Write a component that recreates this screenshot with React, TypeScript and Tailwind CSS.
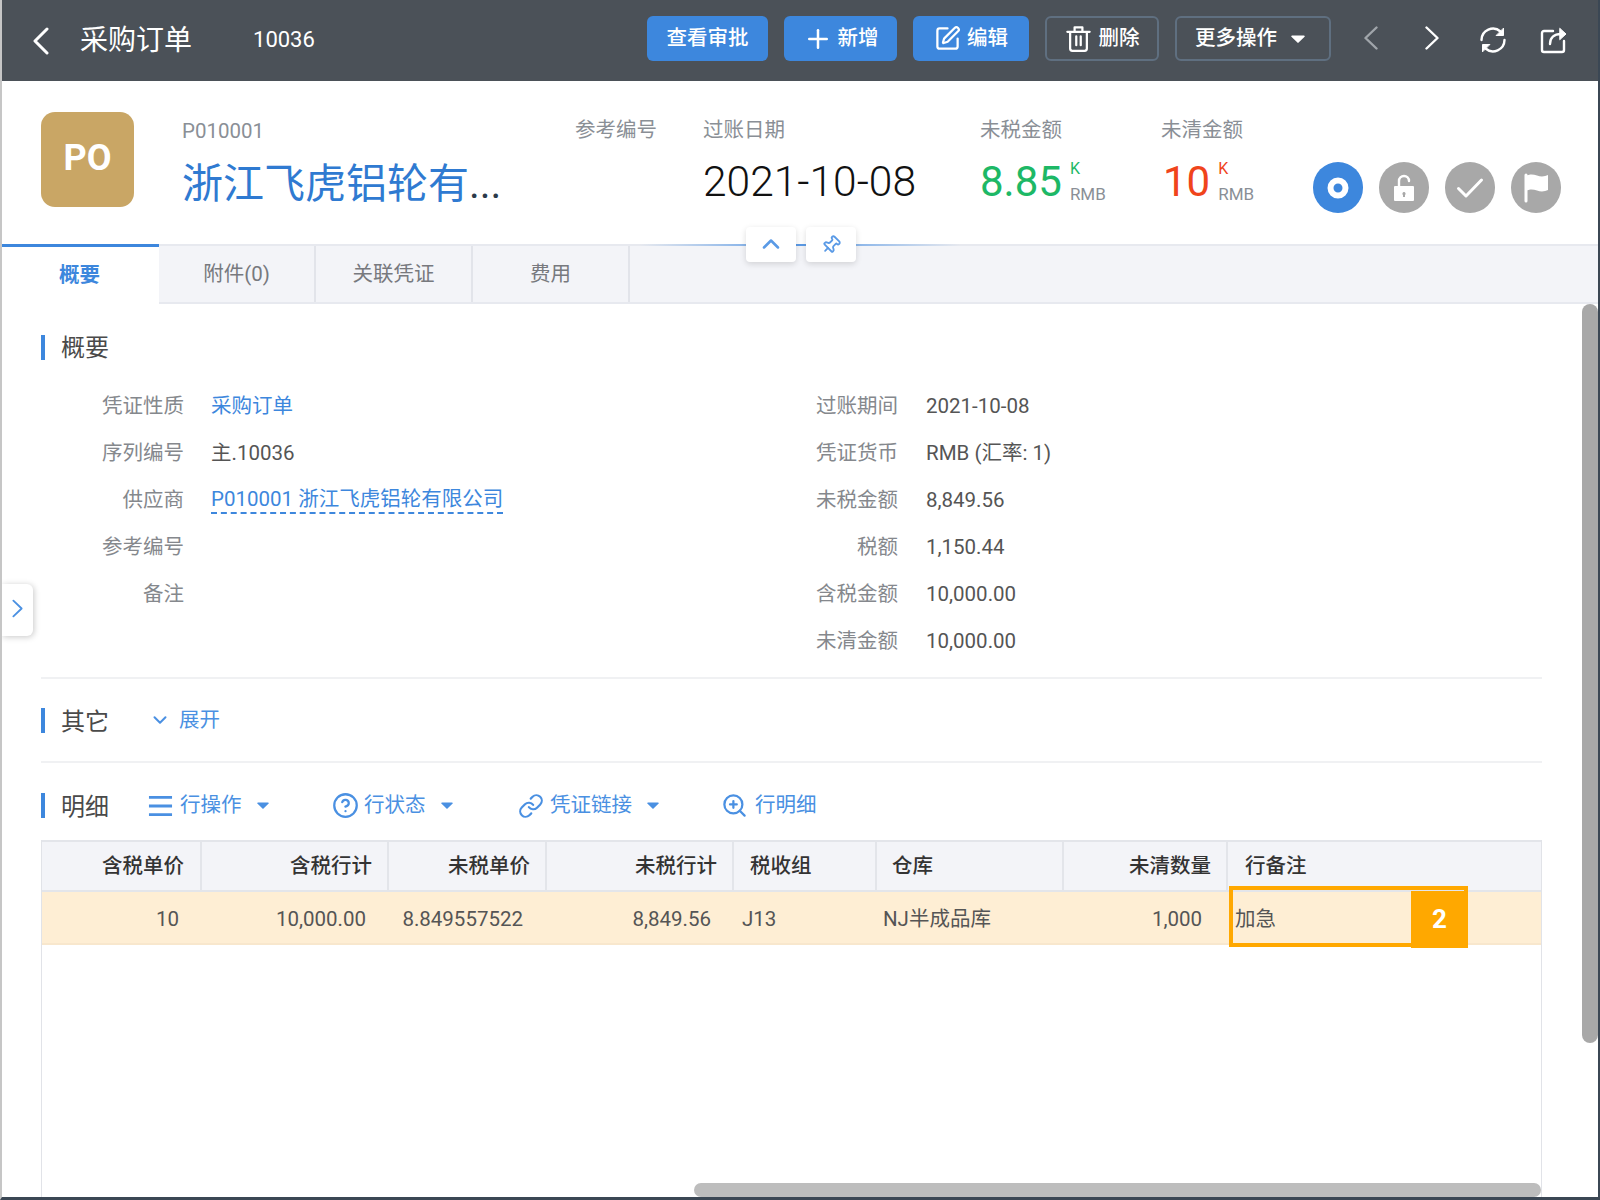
import { ChevronDown, ChevronUp, CircleHelp, Link, Pin, Plus, SquarePen, ZoomIn } from "lucide-react";
import type { ReactNode } from "react";

const tabs = ["概要", "附件(0)", "关联凭证", "费用"];

const leftFields: { label: string; value?: string; kind?: "link" | "dashed" }[] = [
  { label: "凭证性质", value: "采购订单", kind: "link" },
  { label: "序列编号", value: "主.10036" },
  { label: "供应商", value: "P010001 浙江飞虎铝轮有限公司", kind: "dashed" },
  { label: "参考编号" },
  { label: "备注" },
];

const rightFields = [
  { label: "过账期间", value: "2021-10-08" },
  { label: "凭证货币", value: "RMB (汇率: 1)" },
  { label: "未税金额", value: "8,849.56" },
  { label: "税额", value: "1,150.44" },
  { label: "含税金额", value: "10,000.00" },
  { label: "未清金额", value: "10,000.00" },
];

const headCells = [
  { text: "含税单价", className: "justify-end pr-[16px]" },
  { text: "含税行计", className: "justify-end pr-[15px]" },
  { text: "未税单价", className: "justify-end pr-[15px]" },
  { text: "未税行计", className: "justify-end pr-[15px]" },
  { text: "税收组", className: "pl-[16px]" },
  { text: "仓库", className: "pl-[15px]" },
  { text: "未清数量", className: "justify-end pr-[15px]" },
  { text: "行备注", className: "pl-[17px]" },
];

const rowCells = [
  { text: "10", className: "justify-end pr-[23px]" },
  { text: "10,000.00", className: "justify-end pr-[23px]" },
  { text: "8.849557522", className: "justify-end pr-[24px]" },
  { text: "8,849.56", className: "justify-end pr-[23px]" },
  { text: "J13", className: "pl-[8px]" },
  { text: "NJ半成品库", className: "pl-[6px]" },
  { text: "1,000", className: "justify-end pr-[26px]" },
  { text: "加急", className: "pl-[7px]" },
];

function Caret({ className }: { className: string }) {
  return (
    <svg viewBox="0 0 14 8" className={className} fill="currentColor">
      <path d="M1 0.5h12a.8.8 0 0 1 .6 1.3L7.6 7.6a.8.8 0 0 1-1.2 0L.4 1.8A.8.8 0 0 1 1 .5z" />
    </svg>
  );
}

function HeaderButton({ width, filled, children }: { width: string; filled?: boolean; children: ReactNode }) {
  return (
    <button
      className={`${width} ${
        filled ? "bg-[#3d87dd]" : "border-2 border-[#5f6f80]"
      } flex h-[45px] items-center justify-center rounded-[6px] text-[20.5px] font-medium text-white`}
    >
      {children}
    </button>
  );
}

function SectionTitle({ children }: { children: ReactNode }) {
  return (
    <div className="flex h-[25px] items-center border-l-[4px] border-[#3d87dd] pl-[16px] text-[24px] text-[#4a4a4a]">
      {children}
    </div>
  );
}

function ToolItem({ icon, text, caret, width }: { icon: ReactNode; text: string; caret?: boolean; width: string }) {
  return (
    <div className={`${width} flex items-center text-[#4a90e2]`}>
      <span className="flex w-[32px] shrink-0 items-center">{icon}</span>
      <span>{text}</span>
      {caret && <Caret className="ml-[15px] h-[7px] w-[12px]" />}
    </div>
  );
}

function StatusCircle({ blue, children }: { blue?: boolean; children: ReactNode }) {
  return (
    <div
      className={`${
        blue ? "bg-[#3d87dd]" : "bg-[#a8a8a8]"
      } flex h-[51px] w-[50px] items-center justify-center rounded-full text-white`}
    >
      {children}
    </div>
  );
}

export default function App() {
  return (
    <div className="relative flex h-[1200px] w-[1600px] flex-col overflow-hidden bg-white pb-[3px] font-['Roboto','Noto_Sans_CJK_SC',sans-serif] text-[20.5px] text-[#555]">
      {/* top bar */}
      <header className="flex h-[81px] shrink-0 items-center bg-[#4b5158] pl-[32px] pr-[16px] text-white">
        <svg viewBox="0 0 18 28" className="h-[28px] w-[18px]" fill="none" stroke="currentColor" strokeWidth="3" strokeLinecap="round" strokeLinejoin="round">
          <path d="M15 2 3 14l12 12" />
        </svg>
        <span className="ml-[30px] text-[28px]">采购订单</span>
        <span className="mb-[2px] ml-[61px] text-[22px]">10036</span>

        <div className="mb-[4px] ml-auto flex gap-[16px]">
          <HeaderButton width="w-[121px]" filled>
            查看审批
          </HeaderButton>
          <HeaderButton width="w-[113px]" filled>
            <Plus size={30} strokeWidth={2} className="mr-[5px]" />
            新增
          </HeaderButton>
          <HeaderButton width="w-[116px]" filled>
            <SquarePen size={27} strokeWidth={2} className="mr-[6px]" />
            编辑
          </HeaderButton>
          <HeaderButton width="w-[114px]">
            <svg viewBox="0 0 24 26" className="mr-[7px] h-[29px] w-[27px]" fill="none" stroke="currentColor" strokeWidth="2" strokeLinecap="round" strokeLinejoin="round">
              <path d="M2 7h20M8.500 7V3h7v4M4.500 7v15a2 2 0 0 0 2 2h11a2 2 0 0 0 2-2V7M10 11v8M14 11v8" />
            </svg>
            删除
          </HeaderButton>
          <HeaderButton width="w-[156px]">
            更多操作
            <Caret className="ml-[14px] mr-[6px] h-[8px] w-[14px]" />
          </HeaderButton>
        </div>

        <div className="mb-[2px] ml-[9px] flex">
          <span className="flex w-[61px] justify-center text-[#a0a5aa]">
            <svg viewBox="0 0 14 24" className="h-[24px] w-[14px]" fill="none" stroke="currentColor" strokeWidth="2.4" strokeLinecap="round" strokeLinejoin="round">
              <path d="M12.500 1.500 1.500 12l11 10.500" />
            </svg>
          </span>
          <span className="flex w-[61px] justify-center">
            <svg viewBox="0 0 14 24" className="h-[24px] w-[14px]" fill="none" stroke="currentColor" strokeWidth="2.4" strokeLinecap="round" strokeLinejoin="round">
              <path d="M1.500 1.500 12.500 12l-11 10.500" />
            </svg>
          </span>
          <span className="flex w-[61px] justify-center">
            <svg viewBox="0 0 28 28" className="h-[28px] w-[28px]" fill="none" stroke="currentColor" strokeWidth="2.4" strokeLinecap="round">
              <path d="M2.500 14A11.500 11.500 0 0 1 21.500 5.500" />
              <path d="M25.500 14A11.500 11.500 0 0 1 6.500 22.500" />
              <path d="M24.500 2.500v7h-7z" fill="currentColor" strokeWidth="1" strokeLinejoin="round" />
              <path d="M3.500 25.500v-7h7z" fill="currentColor" strokeWidth="1" strokeLinejoin="round" />
            </svg>
          </span>
          <span className="flex w-[61px] justify-center">
            <svg viewBox="0 0 28 28" className="h-[28px] w-[28px]" fill="none" stroke="currentColor" strokeWidth="2.4" strokeLinecap="round" strokeLinejoin="round">
              <path d="M13 5H4a2 2 0 0 0-2 2v17a2 2 0 0 0 2 2h18a2 2 0 0 0 2-2v-9" />
              <path d="M10 18c0-6 4-10 11-10" />
              <path d="M20 2.500 26 8l-6 5.500z" fill="currentColor" strokeWidth="1" />
            </svg>
          </span>
        </div>
      </header>

      {/* document summary */}
      <section className="flex h-[163px] shrink-0 pl-[41px]">
        <div className="mt-[31px] flex h-[95px] w-[93px] items-center justify-center rounded-[14px] bg-[#c9a665] pb-[4px] text-[36px] font-bold text-white">
          PO
        </div>
        <div className="ml-[48px] w-[393px] pt-[35px]">
          <div className="h-[28px] pt-[1px] text-[20.5px] leading-[28px] text-[#8a8f96]">P010001</div>
          <div className="mt-[12px] text-[41px] leading-[56px] text-[#2f7ad1]">
            浙江飞虎铝轮有<span className="text-[#2b3a4a]">...</span>
          </div>
        </div>
        <div className="w-[128px] pt-[35px] leading-[28px] text-[#8a8f96]">参考编号</div>
        <div className="w-[277px] pt-[35px]">
          <div className="leading-[28px] text-[#8a8f96]">过账日期</div>
          <div className="mt-[10px] text-[42.500px] font-light leading-[56px] text-[#111]">2021-10-08</div>
        </div>
        <div className="w-[181px] pt-[35px]">
          <div className="leading-[28px] text-[#8a8f96]">未税金额</div>
          <div className="mt-[10px] flex">
            <span className="text-[42px] leading-[56px] text-[#1db866]">8.85</span>
            <div className="ml-[8px] pt-[7px] leading-none">
              <div className="text-[16px] text-[#1db866]">K</div>
              <div className="mt-[9px] text-[17px] text-[#8a8f96]">RMB</div>
            </div>
          </div>
        </div>
        <div className="w-[152px] pt-[35px]">
          <div className="leading-[28px] text-[#8a8f96]">未清金额</div>
          <div className="mt-[10px] flex pl-[2px]">
            <span className="text-[42px] leading-[56px] text-[#f0441b]">10</span>
            <div className="ml-[8px] pt-[7px] leading-none">
              <div className="text-[16px] text-[#f0441b]">K</div>
              <div className="mt-[9px] text-[17px] text-[#8a8f96]">RMB</div>
            </div>
          </div>
        </div>
        <div className="flex gap-[16px] pt-[81px]">
          <StatusCircle blue>
            <svg viewBox="0 0 22 22" className="h-[22px] w-[22px]" fill="none" stroke="currentColor" strokeWidth="6">
              <circle cx="11" cy="11" r="7.500" />
            </svg>
          </StatusCircle>
          <StatusCircle>
            <svg viewBox="0 0 24 30" className="h-[30px] w-[24px]" fill="currentColor">
              <path d="M7 13V8a5 5 0 0 1 10 0" fill="none" stroke="currentColor" strokeWidth="2.4" strokeLinecap="round" />
              <path fillRule="evenodd" d="M3 13h18a1 1 0 0 1 1 1v13a1 1 0 0 1-1 1H3a1 1 0 0 1-1-1V14a1 1 0 0 1 1-1zm9 6a1.700 1.700 0 0 0-1 3v2h2v-2a1.700 1.700 0 0 0-1-3z" />
            </svg>
          </StatusCircle>
          <StatusCircle>
            <svg viewBox="0 0 28 22" className="h-[22px] w-[28px]" fill="none" stroke="currentColor" strokeWidth="3" strokeLinecap="round" strokeLinejoin="round">
              <path d="M2.500 11.500 10 19 25.500 3" />
            </svg>
          </StatusCircle>
          <StatusCircle>
            <svg viewBox="0 0 26 30" className="h-[30px] w-[26px]" fill="currentColor">
              <path d="M3 2v26" fill="none" stroke="currentColor" strokeWidth="3" strokeLinecap="round" />
              <path d="M3 3c3-2 7-2 11-.5s8 1 11-.5v15c-3 1.500-7 2-11 .5s-8-1.500-11 .5z" />
            </svg>
          </StatusCircle>
        </div>
      </section>

      {/* tabs */}
      <nav className="relative flex h-[60px] shrink-0 border-y-2 border-[#e7e9ef] bg-[#f3f4f8]">
        {tabs.map((tab, i) => (
          <div
            key={tab}
            className={
              i === 0
                ? "-my-[2px] flex w-[159px] items-center justify-center border-t-[3px] border-[#3d87dd] bg-white font-bold text-[#3d87dd]"
                : "flex w-[157px] items-center justify-center border-r-2 border-[#e2e4ea] text-[#77797e]"
            }
          >
            {tab}
          </div>
        ))}
        <div className="absolute left-[640px] top-[-2px] h-[2px] w-[320px] bg-gradient-to-r from-transparent via-[#5a9ae6] to-transparent" />
        <div className="absolute left-[746px] top-[-19px] flex h-[35px] w-[50px] items-center justify-center rounded-[4px] bg-white text-[#5a9ae6] shadow-[0_2px_6px_rgba(0,0,0,0.14)]">
          <ChevronUp size={28} strokeWidth={2.2} className="-translate-y-[1px]" />
        </div>
        <div className="absolute left-[806px] top-[-19px] flex h-[35px] w-[50px] items-center justify-center rounded-[4px] bg-white text-[#5a9ae6] shadow-[0_2px_6px_rgba(0,0,0,0.14)]">
          <Pin size={20} strokeWidth={2.2} className="rotate-45" />
        </div>
      </nav>

      {/* body */}
      <main className="flex min-h-0 flex-1 flex-col pl-[41px] pr-[58px] pt-[31px]">
        <SectionTitle>概要</SectionTitle>

        <div className="mt-[23px] flex">
          <div className="w-[673px]">
            {leftFields.map((f) => (
              <div key={f.label} className="flex h-[47px] items-center">
                <span className="w-[143px] text-right text-[#85888d]">{f.label}</span>
                {f.value && (
                  <span
                    className={`ml-[27px] ${
                      f.kind === "link"
                        ? "text-[#3d87dd]"
                        : f.kind === "dashed"
                          ? "border-b-2 border-dashed border-[#3d87dd] leading-[25px] text-[#3d87dd]"
                          : "text-[#555]"
                    }`}
                  >
                    {f.value}
                  </span>
                )}
              </div>
            ))}
          </div>
          <div>
            {rightFields.map((f) => (
              <div key={f.label} className="flex h-[47px] items-center">
                <span className="w-[184px] text-right text-[#85888d]">{f.label}</span>
                <span className="ml-[28px] text-[#555]">{f.value}</span>
              </div>
            ))}
          </div>
        </div>

        <div className="mt-[12px] border-b-2 border-[#f0f1f3]" />

        <div className="mt-[29px] flex h-[25px] items-center">
          <SectionTitle>
            <span className="translate-y-[1px]">其它</span>
          </SectionTitle>
          <ChevronDown size={22} strokeWidth={2.2} className="ml-[40px] -translate-y-[1px] text-[#4a90e2]" />
          <span className="ml-[8px] text-[#4a90e2]">展开</span>
        </div>

        <div className="mt-[28px] border-b-2 border-[#f0f1f3]" />

        <div className="mt-[30px] flex h-[25px] items-center">
          <SectionTitle>
            <span className="translate-y-[1px]">明细</span>
          </SectionTitle>
          <div className="ml-[39px] flex">
            <ToolItem
              width="w-[184px]"
              caret
              text="行操作"
              icon={
                <svg viewBox="0 0 26 24" className="h-[24px] w-[25px]" fill="none" stroke="currentColor" strokeWidth="3">
                  <path d="M1 3h24M1 12h24M1 21h24" />
                </svg>
              }
            />
            <ToolItem width="w-[186px]" caret text="行状态" icon={<CircleHelp size={27} strokeWidth={2} />} />
            <ToolItem width="w-[205px]" caret text="凭证链接" icon={<Link size={26} strokeWidth={2} />} />
            <ToolItem width="w-[110px]" text="行明细" icon={<ZoomIn size={27} strokeWidth={2} className="-ml-[2px]" />} />
          </div>
        </div>

        <div className="mt-[22px] flex min-h-0 flex-1 flex-col border-x border-[#e1e3e8]">
          <div className="grid h-[52px] grid-cols-[160px_187px_158px_187px_143px_187px_164px_313px] border-y-2 border-[#e3e5ea] bg-[#f3f4f8] font-medium text-[#333]">
            {headCells.map((c) => (
              <div key={c.text} className={`flex items-center border-r-2 border-[#e3e5ea] pt-[1px] last:border-r-0 ${c.className}`}>
                {c.text}
              </div>
            ))}
          </div>
          <div className="grid h-[53px] grid-cols-[160px_187px_158px_187px_143px_187px_164px_313px] border-b-2 border-[#f8e7cd] bg-[#feeed4]">
            {rowCells.map((c) => (
              <div key={c.text} className={`flex items-center pt-[3px] ${c.className}`}>
                {c.text}
              </div>
            ))}
          </div>
        </div>
      </main>

      {/* collapsed side panel tab */}
      <div className="absolute left-[2px] top-[584px] flex h-[52px] w-[31px] items-center justify-center rounded-r-[6px] bg-white pb-[3px] text-[#4a90e2] shadow-[1px_1px_6px_rgba(0,0,0,0.22)]">
        <svg viewBox="0 0 12 20" className="h-[19px] w-[11px]" fill="none" stroke="currentColor" strokeWidth="2" strokeLinecap="round" strokeLinejoin="round">
          <path d="M1.500 1.500 10.500 10l-9 8.500" />
        </svg>
      </div>

      {/* scrollbars */}
      <div className="absolute left-[1582px] top-[304px] h-[739px] w-[16px] rounded-[8px] bg-[#a8a8a8]" />
      <div className="absolute left-[694px] top-[1183px] h-[14px] w-[847px] rounded-[7px] bg-[#bdbdbd]" />

      {/* callout */}
      <div className="absolute left-[1229px] top-[886px] h-[61px] w-[239px] border-[4px] border-[#ffa800]" />
      <div className="absolute left-[1411px] top-[891px] flex h-[57px] w-[57px] items-center justify-center bg-[#ffa800] text-[26px] font-bold text-white">
        2
      </div>

      {/* screenshot frame */}
      <div className="pointer-events-none absolute inset-0 border-b-[3px] border-l-2 border-r-2 border-b-[#3b4754] border-l-[#c6c6c6] border-r-[#3b4754]" />
    </div>
  );
}
